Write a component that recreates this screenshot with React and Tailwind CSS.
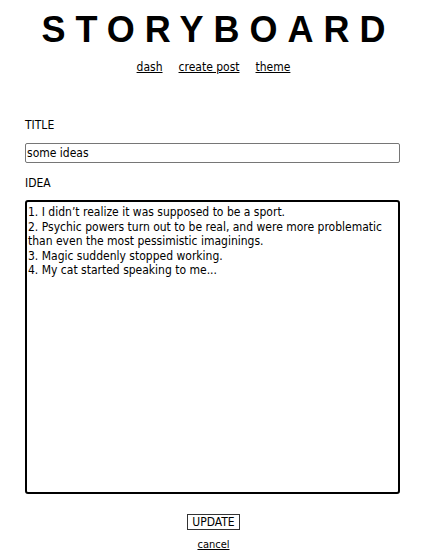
import { useState } from "react";

const IDEAS = `1. I didn’t realize it was supposed to be a sport.
2. Psychic powers turn out to be real, and were more problematic than even the most pessimistic imaginings.
3. Magic suddenly stopped working.
4. My cat started speaking to me...`;

export default function App() {
  const [title, setTitle] = useState("some ideas");
  const [idea, setIdea] = useState(IDEAS);

  return (
    <div className="min-h-screen bg-white text-black font-['DejaVu_Sans_Condensed','Liberation_Sans',sans-serif] text-[12px]">
      {/* Header */}
      <header className="flex flex-col items-center pt-[10px]">
        <h1 className="font-['Liberation_Sans',sans-serif] font-bold text-[36px] leading-[40px] tracking-[10px] pl-[10px]">
          STORYBOARD
        </h1>
        <nav className="flex gap-4 mt-[8px]">
          <a href="#" className="underline">dash</a>
          <a href="#" className="underline">create post</a>
          <a href="#" className="underline">theme</a>
        </nav>
      </header>

      {/* Form */}
      <form className="px-[25px] pt-[41px] flex flex-col" onSubmit={(e) => e.preventDefault()}>
        <label className="leading-[16px]">TITLE</label>
        <input
          value={title}
          onChange={(e) => setTitle(e.target.value)}
          className="mt-[10px] h-[20px] w-[375px] border border-[#767676] rounded-[2px] px-[1px] leading-[16px] outline-none"
        />
        <label className="mt-[12px] leading-[16px]">IDEA</label>
        <textarea
          value={idea}
          onChange={(e) => setIdea(e.target.value)}
          className="mt-[9px] h-[294px] w-[375px] border-2 border-black rounded-[3px] px-[1px] py-[3px] leading-[14.5px] resize-none outline-none"
        />
        <div className="flex flex-col items-center mt-[20px]">
          <button type="submit" className="border border-[#333] px-[4px] h-[16px] leading-[14px]">
            UPDATE
          </button>
          <a href="#" className="underline text-[11px] mt-[7px]">cancel</a>
        </div>
      </form>
    </div>
  );
}
